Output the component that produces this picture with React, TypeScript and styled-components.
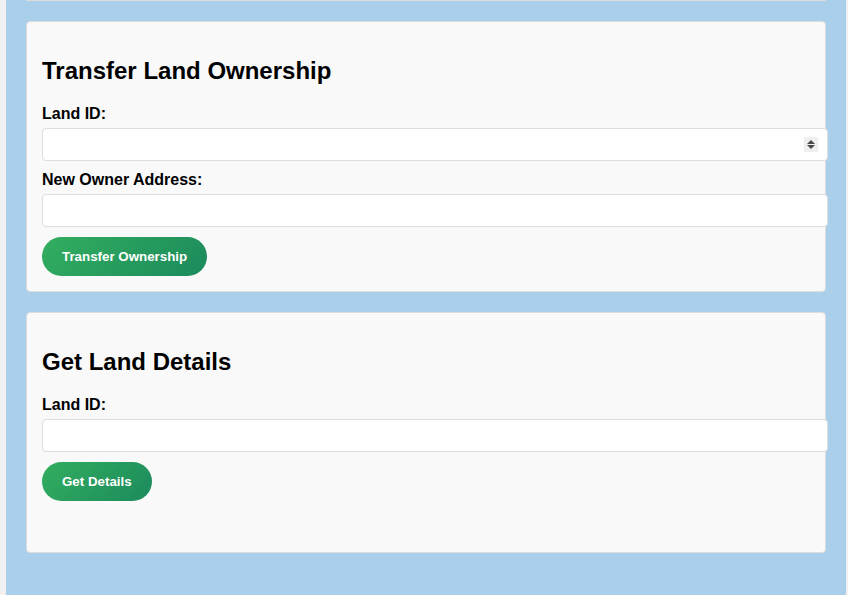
import React from "react";
import styled, { createGlobalStyle } from "styled-components";

const Global = createGlobalStyle`
  html, body { margin: 0; padding: 0; }
  body {
    background: #f1f1f1;
    font-family: "Liberation Sans", Arial, sans-serif;
    padding: 0 2px 0 6px;
    height: 595px;
    overflow: hidden;
  }
`;

const Page = styled.div`
  background: #a9cfea;
  padding: 0 20px;
  height: 595px;
  box-sizing: border-box;
`;

const PrevCardEdge = styled.div`
  height: 0;
  border: 1px solid #dcdcdc;
  border-top: none;
  border-radius: 0 0 4px 4px;
  background: #f9f9f9;
  margin-bottom: 20px;
`;

const Card = styled.section`
  background: #f9f9f9;
  border: 1px solid #dcdcdc;
  border-radius: 4px;
  padding: 15px;
  margin-bottom: 20px;
`;

const Title = styled.h2`
  font-size: 24px;
  font-weight: bold;
  margin: 20px 0;
  line-height: 28px;
  color: #000;
`;

const Label = styled.label`
  display: block;
  font-size: 16px;
  font-weight: bold;
  line-height: 18px;
  margin-bottom: 5px;
  color: #000;
`;

const Field = styled.div`
  position: relative;
  margin-bottom: 10px;
`;

const Input = styled.input`
  display: block;
  width: 100%;
  height: 15px;
  padding: 8px;
  border: 1px solid #dddddd;
  border-radius: 4px;
  background: #fff;
  font-family: "Liberation Sans", Arial, sans-serif;
  font-size: 14px;
  outline: none;
  &::-webkit-inner-spin-button,
  &::-webkit-outer-spin-button {
    -webkit-appearance: none;
    margin: 0;
  }
`;

const Spinner = styled.span`
  position: absolute;
  left: 762px;
  top: 9px;
  width: 14px;
  height: 15px;
  background: #efefef;
  display: flex;
  align-items: center;
  justify-content: center;
`;

const Button = styled.button`
  display: inline-block;
  padding: 12px 20px;
  border: none;
  border-radius: 20px;
  background: linear-gradient(135deg, #33ae5f 0%, #1b8a5c 100%);
  color: #fff;
  font-family: "Liberation Sans", Arial, sans-serif;
  font-size: 13.33px;
  font-weight: bold;
  line-height: 15px;
  cursor: pointer;
  margin-top: 0;
`;

const Result = styled.div`
  margin-top: 20px;
  height: 16px;
`;

const SpinIcon = () => (
  <svg width="10" height="11" viewBox="0 0 10 11">
    <path d="M5 1 L9 5 L1 5 Z" fill="#4a4a4a" />
    <path d="M1 6 L9 6 L5 10 Z" fill="#4a4a4a" />
  </svg>
);

export default function App() {
  return (
    <>
      <Global />
      <Page>
        <PrevCardEdge />
        <Card>
          <Title>Transfer Land Ownership</Title>
          <Label htmlFor="tid">Land ID:</Label>
          <Field>
            <Input id="tid" type="number" />
            <Spinner>
              <SpinIcon />
            </Spinner>
          </Field>
          <Label htmlFor="owner">New Owner Address:</Label>
          <Field>
            <Input id="owner" type="text" />
          </Field>
          <Button>Transfer Ownership</Button>
        </Card>
        <Card>
          <Title>Get Land Details</Title>
          <Label htmlFor="gid">Land ID:</Label>
          <Field>
            <Input id="gid" type="number" />
          </Field>
          <Button>Get Details</Button>
          <Result />
        </Card>
      </Page>
    </>
  );
}
